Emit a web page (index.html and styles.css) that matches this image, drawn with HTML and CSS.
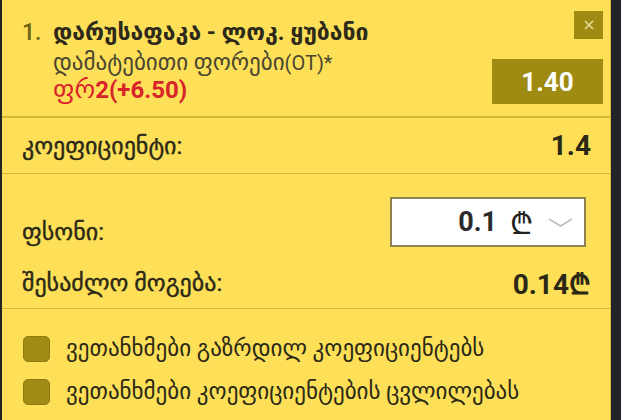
FILE: index.html
```html
<!DOCTYPE html>
<html lang="ka">
<head>
<meta charset="utf-8">
<link rel="stylesheet" href="styles.css">
</head>
<body>
<div class="panel">
  <section class="bet">
    <div class="bet-info">
      <div class="bet-title"><span class="num">1.</span><span class="teams">დარუსაფაკა - ლოკ. ყუბანი</span></div>
      <div class="bet-market"><span class="ka">დამატებითი ფორები</span>(OT)*</div>
      <div class="bet-pick"><span class="pick-name">ფრ</span><b>2(+6.50)</b></div>
    </div>
    <div class="bet-side">
      <button class="close" type="button">
        <svg width="12" height="12" viewBox="0 0 12 12"><path d="M2 2L10 10M10 2L2 10" stroke="#e9dc9a" stroke-width="1.6"/></svg>
      </button>
      <div class="odds">1.40</div>
    </div>
  </section>
  <section class="row coef">
    <span class="label">კოეფიციენტი:</span>
    <span class="value">1.4</span>
  </section>
  <section class="stake">
    <div class="row stake-row">
      <span class="label stake-label">ფსონი:</span>
      <div class="stake-input">
        <span class="amount">0.1</span>
        <span class="cur">₾</span>
        <svg class="chev" width="25" height="9" viewBox="0 0 25 9"><path d="M1 1L12.5 8L24 1" fill="none" stroke="#bdbdbd" stroke-width="1.5"/></svg>
      </div>
    </div>
    <div class="row win-row">
      <span class="label">შესაძლო მოგება:</span>
      <span class="value">0.14<span class="cur-b">₾</span></span>
    </div>
  </section>
  <section class="agree">
    <label class="check"><span class="box"></span><span>ვეთანხმები გაზრდილ კოეფიციენტებს</span></label>
    <label class="check"><span class="box"></span><span>ვეთანხმები კოეფიციენტების ცვლილებას</span></label>
  </section>
</div>
</body>
</html>
```
FILE: styles.css
```css
html, body {
  margin: 0;
  padding: 0;
  background: #222326;
}
body {
  font-family: Roboto, "DejaVu Sans", sans-serif;
  color: #2b2816;
}
.panel {
  width: 608px;
  height: 420px;
  margin-left: 2px;
  background: #fde058;
  border-right: 1px solid #d9bc3e;
}
.bet {
  display: flex;
  justify-content: space-between;
  padding: 11px 7px 0 20px;
  height: 105px;
  border-bottom: 2px solid #d7b93a;
}
.bet-info {
  padding-top: 8px;
}
.bet-title {
  display: flex;
  align-items: baseline;
  font-weight: bold;
}
.num {
  color: #6d6214;
  font-size: 23px;
  font-weight: 500;
  width: 31px;
}
.teams {
  font-size: 23px;
  color: #2d2a1c;
}
.bet-market {
  margin-top: 3px;
  margin-left: 31px;
  font-size: 20px;
  color: #4a4530;
}
.bet-market .ka {
  font-size: 23px;
}
.bet-pick {
  margin-left: 31px;
  font-size: 24px;
  line-height: 26px;
  color: #d9232b;
}
.pick-name {
  font-weight: normal;
  font-size: 26px;
}
.bet-side {
  display: flex;
  flex-direction: column;
  align-items: flex-end;
}
.close {
  width: 29px;
  height: 28px;
  border: none;
  padding: 0;
  background: #a08b12;
  display: flex;
  align-items: center;
  justify-content: center;
}
.odds {
  margin-top: 20px;
  width: 111px;
  height: 45px;
  background: #a08b12;
  color: #fff;
  font-size: 26px;
  font-weight: bold;
  display: flex;
  align-items: center;
  justify-content: center;
}
.row {
  display: flex;
  align-items: center;
  justify-content: space-between;
  padding: 0 19px 0 20px;
}
.label {
  font-size: 24px;
  color: #2b2816;
  -webkit-text-stroke: 0.4px #2b2816;
}
.value {
  font-size: 28px;
  font-weight: bold;
  color: #2b2816;
}
.cur-b {
  font-family: "DejaVu Sans", sans-serif;
  font-size: 28px;
}
.coef {
  height: 55px;
  border-bottom: 1px solid #d7b93a;
}
.stake {
  height: 134px;
  border-bottom: 1px solid #d7b93a;
}
.stake-row {
  padding-top: 23px;
  padding-right: 24px;
}
.stake-label {
  margin-top: 20px;
}
.stake-input {
  box-sizing: border-box;
  width: 196px;
  height: 50px;
  background: #fff;
  border: 2px solid #8b8452;
  display: flex;
  align-items: center;
  justify-content: flex-end;
  padding-right: 11px;
}
.amount {
  font-size: 27px;
  font-weight: bold;
  color: #2b2b2b;
}
.cur {
  font-size: 30px;
  font-weight: 300;
  margin: 0 15px 0 13px;
  color: #222;
  font-family: "DejaVu Sans", sans-serif;
}
.win-row {
  margin-top: 17px;
}
.agree {
  padding: 26px 0 0 21px;
  display: flex;
  flex-direction: column;
  gap: 16px;
}
.check {
  display: flex;
  align-items: center;
  gap: 16px;
  font-size: 23px;
  color: #2b2816;
}
.box {
  box-sizing: border-box;
  width: 27px;
  height: 26px;
  border-radius: 5px;
  background: #a08b14;
  border: 1px solid #8f7c10;
}
```
